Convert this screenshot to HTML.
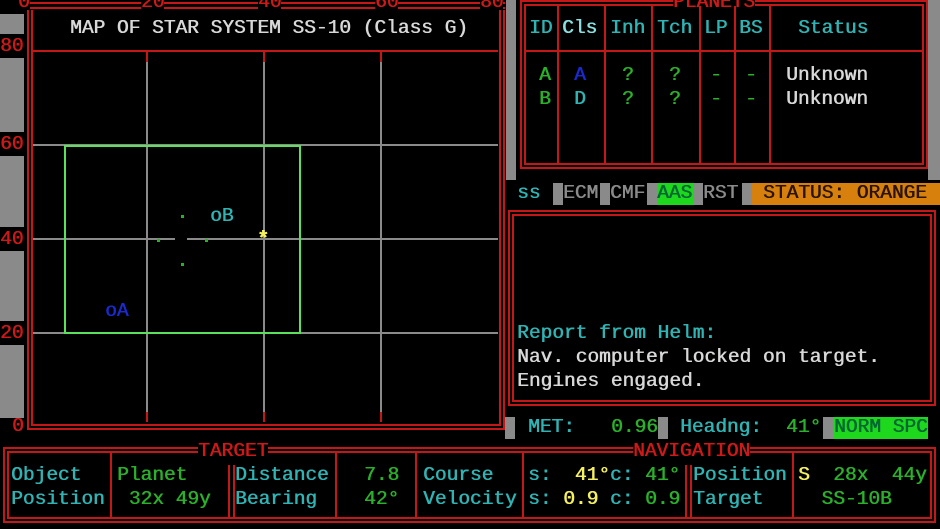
<!DOCTYPE html>
<html><head><meta charset="utf-8"><style>
body{margin:0;width:940px;height:529px;background:#000;overflow:hidden;position:relative;font-family:"Liberation Mono",monospace;font-size:19.5px;}
div{position:absolute;box-sizing:border-box;}
.t{white-space:pre;line-height:24px;text-shadow:0.6px 0 0 currentColor;}
.db{border:6px double #c41818;}
.r{color:#d01818}.c{color:#2fb4b4}.g{color:#2ab02a}.w{color:#d8d8d8}.y{color:#f4f060}.b{color:#1a2ad0}.gr{color:#8a8a8a}
.vl{background:#8a8a8a;width:2px}.hl{background:#8a8a8a;height:2px}
.rv{background:#c41818;width:2px}.rh{background:#c41818;height:2px}
.gb{background:#8a8a8a}
</style></head><body>
<div class="gb" style="left:0;top:14px;width:24px;height:404px"></div>
<div class="t r" style="left:0;top:34px;background:#000;width:24px;overflow:hidden">80</div>
<div class="t r" style="left:0;top:132px;background:#000;width:24px;overflow:hidden">60</div>
<div class="t r" style="left:0;top:227px;background:#000;width:24px;overflow:hidden">40</div>
<div class="t r" style="left:0;top:321px;background:#000;width:24px;overflow:hidden">20</div>
<div class="t r" style="left:12px;top:414px">0</div>
<div class="rh" style="left:27px;top:2px;width:478px"></div>
<div class="rh" style="left:27px;top:7px;width:478px"></div>
<div class="t r" style="left:18px;top:-10px;background:#000">0</div>
<div class="t r" style="left:141px;top:-10px;background:#000">20</div>
<div class="t r" style="left:258px;top:-10px;background:#000">40</div>
<div class="t r" style="left:375px;top:-10px;background:#000">60</div>
<div class="t r" style="left:480px;top:-10px;background:#000">80</div>
<div class="db" style="left:27px;top:10px;width:478px;height:420px;border-top:none"></div>
<div class="t w" style="left:70px;top:16px">MAP OF STAR SYSTEM SS-10 (Class G)</div>
<div class="rh" style="left:33px;top:50px;width:465px"></div>
<div class="vl" style="left:146px;top:52px;height:370px"></div>
<div class="vl" style="left:263px;top:52px;height:370px"></div>
<div class="vl" style="left:380px;top:52px;height:370px"></div>
<div class="rv" style="left:146px;top:52px;height:10px"></div>
<div class="rv" style="left:263px;top:52px;height:10px"></div>
<div class="rv" style="left:380px;top:52px;height:10px"></div>
<div class="rv" style="left:146px;top:412px;height:10px"></div>
<div class="rv" style="left:263px;top:412px;height:10px"></div>
<div class="rv" style="left:380px;top:412px;height:10px"></div>
<div class="hl" style="left:33px;top:144px;width:465px"></div>
<div class="hl" style="left:33px;top:238px;width:465px"></div>
<div class="hl" style="left:33px;top:332px;width:465px"></div>
<div style="left:64px;top:145px;width:237px;height:189px;border:2px solid #5ae05a;background:transparent"></div>
<div style="left:181px;top:215px;width:3px;height:3px;background:#2ab02a"></div>
<div style="left:181px;top:263px;width:3px;height:3px;background:#2ab02a"></div>
<div style="left:157px;top:239px;width:3px;height:3px;background:#2ab02a"></div>
<div style="left:205px;top:239px;width:3px;height:3px;background:#2ab02a"></div>
<div style="left:175px;top:236px;width:12px;height:8px;background:#000"></div>
<div class="t c" style="left:210px;top:204px">oB</div>
<div class="t b" style="left:105px;top:299px">oA</div>
<div class="t y" style="left:257px;top:229px;font-size:20px;font-weight:bold">*</div>
<div class="gb" style="left:506px;top:0;width:10px;height:180px"></div>
<div class="gb" style="left:928px;top:0;width:12px;height:180px"></div>
<div class="db" style="left:520px;top:0;width:408px;height:169px;border-top-width:6px"></div>
<div class="t r" style="left:673px;top:-10px;background:#000">PLANETS</div>
<div class="rh" style="left:526px;top:50px;width:396px"></div>
<div class="rv" style="left:557px;top:6px;height:159px"></div>
<div class="rv" style="left:604px;top:6px;height:159px"></div>
<div class="rv" style="left:651px;top:6px;height:159px"></div>
<div class="rv" style="left:699px;top:6px;height:159px"></div>
<div class="rv" style="left:734px;top:6px;height:159px"></div>
<div class="rv" style="left:769px;top:6px;height:159px"></div>
<div class="t c" style="left:529px;top:16px">ID</div>
<div class="t" style="left:562px;top:16px;color:#8ae0e0">Cls</div>
<div class="t c" style="left:610px;top:16px">Inh</div>
<div class="t c" style="left:657px;top:16px">Tch</div>
<div class="t c" style="left:704px;top:16px">LP</div>
<div class="t c" style="left:739px;top:16px">BS</div>
<div class="t c" style="left:798px;top:16px">Status</div>
<div class="t g" style="left:539px;top:63px">A<br>B</div>
<div class="t" style="left:574px;top:63px"><span class="b">A</span><br><span class="c">D</span></div>
<div class="t g" style="left:622px;top:63px">?<br>?</div>
<div class="t g" style="left:669px;top:63px">?<br>?</div>
<div class="t g" style="left:710px;top:63px">-<br>-</div>
<div class="t g" style="left:745px;top:63px">-<br>-</div>
<div class="t w" style="left:786px;top:63px">Unknown<br>Unknown</div>
<div class="t c" style="left:517px;top:181px">ss</div>
<div class="gb" style="left:553px;top:183px;width:10px;height:22px"></div>
<div class="t gr" style="left:563px;top:181px">ECM</div>
<div class="gb" style="left:600px;top:183px;width:10px;height:22px"></div>
<div class="t gr" style="left:610px;top:181px">CMF</div>
<div class="gb" style="left:647px;top:183px;width:10px;height:22px"></div>
<div style="left:657px;top:183px;width:36px;height:22px;background:#1ed81e"></div>
<div class="t" style="left:657px;top:181px;color:#063">AAS</div>
<div class="gb" style="left:693px;top:183px;width:10px;height:22px"></div>
<div class="t gr" style="left:703px;top:181px">RST</div>
<div class="gb" style="left:742px;top:183px;width:10px;height:22px"></div>
<div style="left:752px;top:183px;width:188px;height:22px;background:#d8800e"></div>
<div class="t" style="left:763px;top:181px;color:#2a1400">STATUS: ORANGE</div>
<div class="db" style="left:508px;top:210px;width:428px;height:196px"></div>
<div class="t c" style="left:517px;top:321px">Report from Helm:</div>
<div class="t w" style="left:517px;top:345px">Nav. computer locked on target.</div>
<div class="t w" style="left:517px;top:369px">Engines engaged.</div>
<div class="gb" style="left:505px;top:417px;width:10px;height:22px"></div>
<div class="t c" style="left:528px;top:415px">MET:</div>
<div class="t g" style="left:611px;top:415px">0.96</div>
<div class="gb" style="left:658px;top:417px;width:10px;height:22px"></div>
<div class="t c" style="left:680px;top:415px">Headng:</div>
<div class="t g" style="left:786px;top:415px">41°</div>
<div class="gb" style="left:823px;top:417px;width:10px;height:22px"></div>
<div style="left:833px;top:417px;width:95px;height:22px;background:#1ed81e"></div>
<div class="t" style="left:834px;top:415px;color:#063">NORM SPC</div>
<div class="db" style="left:3px;top:447px;width:933px;height:76px"></div>
<div class="t r" style="left:198px;top:439px;background:#000">TARGET</div>
<div class="t r" style="left:633px;top:439px;background:#000">NAVIGATION</div>
<div class="rv" style="left:110px;top:453px;height:66px"></div>
<div class="rv" style="left:228px;top:465px;height:54px"></div>
<div class="rv" style="left:233px;top:465px;height:54px"></div>
<div class="rv" style="left:335px;top:453px;height:66px"></div>
<div class="rv" style="left:415px;top:453px;height:66px"></div>
<div class="rv" style="left:522px;top:453px;height:66px"></div>
<div class="rv" style="left:685px;top:465px;height:54px"></div>
<div class="rv" style="left:690px;top:465px;height:54px"></div>
<div class="rv" style="left:792px;top:453px;height:66px"></div>
<div class="t c" style="left:11px;top:463px">Object<br>Position</div>
<div class="t g" style="left:117px;top:463px">Planet<br> 32x 49y</div>
<div class="t c" style="left:235px;top:463px">Distance<br>Bearing</div>
<div class="t g" style="left:364px;top:463px">7.8<br>42°</div>
<div class="t c" style="left:423px;top:463px">Course<br>Velocity</div>
<div class="t" style="left:528px;top:463px"><span class="c">s: </span><span class="y"> 41°</span><span class="c">c: </span><span class="g">41°</span><br><span class="c">s: </span><span class="y">0.9 </span><span class="c">c: </span><span class="g">0.9</span></div>
<div class="t c" style="left:693px;top:463px">Position<br>Target</div>
<div class="t" style="left:798px;top:463px"><span class="y">S</span><span class="g">  28x  44y</span><br><span class="g">  SS-10B</span></div>
</body></html>
